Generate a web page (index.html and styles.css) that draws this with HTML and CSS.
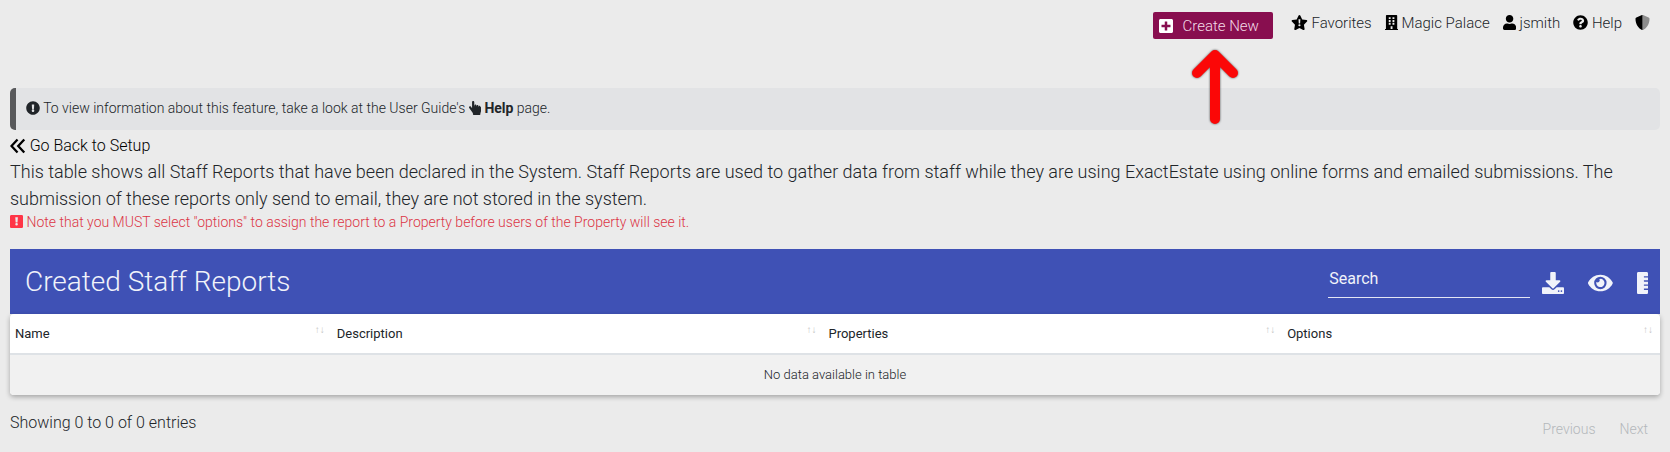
FILE: index.html
```
<!DOCTYPE html>
<html lang="en">
<head>
  <meta charset="UTF-8">
  <meta name="viewport" content="width=device-width, initial-scale=1.0">
  <title>Staff Reports</title>
  <link rel="stylesheet" href="styles.css">
</head>
<body>
  <header class="topbar">
    <div class="create">
      <button type="button" class="btn-create">
        <svg class="icon" viewBox="0 0 448 512"><path d="M400 32H48C21.5 32 0 53.5 0 80v352c0 26.5 21.5 48 48 48h352c26.5 0 48-21.5 48-48V80c0-26.5-21.5-48-48-48zm-32 252c0 6.600-5.400 12-12 12h-92v92c0 6.600-5.400 12-12 12h-56c-6.600 0-12-5.400-12-12v-92H92c-6.600 0-12-5.400-12-12v-56c0-6.600 5.400-12 12-12h92v-92c0-6.600 5.400-12 12-12h56c6.600 0 12 5.400 12 12v92h92c6.600 0 12 5.400 12 12v56z"/></svg>
        Create New
      </button>
      <svg class="arrow" viewBox="0 0 50 78"><path d="M25 70V7M7 24L25 6L43 24"/></svg>
    </div>
    <nav class="menu">
      <a href="#"><svg class="icon" viewBox="0 0 576 512"><path fill-rule="evenodd" d="M259 18L194 150L48 171c-26 4-37 36-18 55l106 103l-25 145c-4 26 23 46 47 34l130-68l130 68c24 12 51-8 47-34l-25-145l106-103c19-19 8-51-18-55l-146-21l-65-132c-12-24-46-24-58 0zM256 144h64l-9 144h-46zM288 312a38 38 0 1 1 0 76a38 38 0 1 1 0-76z"/></svg> Favorites</a>
      <a href="#"><svg class="icon" viewBox="0 0 448 512"><path fill-rule="evenodd" d="M436 480h-20V24c0-13-11-24-24-24H56C43 0 32 11 32 24v456H12c-7 0-12 5-12 12v20h448v-20c0-7-5-12-12-12zM128 76h64v64h-64zM256 76h64v64h-64zM128 172h64v64h-64zM256 172h64v64h-64zM128 268h64v64h-64zM256 268h64v64h-64zM192 384h64v96h-64z"/></svg> Magic Palace</a>
      <a href="#"><svg class="icon" viewBox="0 0 448 512"><path d="M224 256c70.700 0 128-57.300 128-128S294.700 0 224 0 96 57.300 96 128s57.300 128 128 128zm89.600 32h-16.700c-22.200 10.200-46.900 16-72.900 16s-50.600-5.800-72.900-16h-16.700C60.200 288 0 348.200 0 422.400V464c0 26.500 21.500 48 48 48h352c26.500 0 48-21.500 48-48v-41.600c0-74.200-60.200-134.400-134.400-134.400z"/></svg> jsmith</a>
      <a href="#"><svg class="icon" viewBox="0 0 512 512"><path d="M504 256c0 136.997-111.043 248-248 248S8 392.997 8 256C8 119.083 119.043 8 256 8s248 111.083 248 248zM262.655 90c-54.497 0-89.255 22.957-116.549 63.758-3.536 5.286-2.353 12.415 2.715 16.258l34.699 26.310c5.205 3.947 12.621 3.008 16.665-2.122 17.864-22.658 30.113-35.797 57.303-35.797 20.429 0 45.698 13.148 45.698 32.958 0 14.976-12.363 22.667-32.534 33.976C247.128 238.528 216 254.941 216 296v4c0 6.627 5.373 12 12 12h56c6.627 0 12-5.373 12-12v-1.333c0-28.462 83.186-29.647 83.186-106.667 0-58.002-60.165-102-116.531-102zM256 338c-25.365 0-46 20.635-46 46 0 25.364 20.635 46 46 46s46-20.636 46-46c0-25.365-20.635-46-46-46z"/></svg> Help</a>
      <a href="#" aria-label="Security"><svg class="icon" viewBox="0 0 512 512"><path d="M256 0c-6 0-12 1-18 4L46 84c-18 7-30 25-30 44c0 199 115 336 222 380c6 3 12 4 18 4z"/><path opacity=".4" d="M256 0c6 0 12 1 18 4l192 80c18 7 30 25 30 44c0 199-115 336-222 380c-6 3-12 4-18 4z"/></svg></a>
    </nav>
  </header>

  <main class="content">
    <div class="alert">
      <svg class="icon" viewBox="0 0 512 512"><path d="M504 256c0 136.997-111.043 248-248 248S8 392.997 8 256C8 119.083 119.043 8 256 8s248 111.083 248 248zm-248 50c-25.405 0-46 20.595-46 46s20.595 46 46 46 46-20.595 46-46-20.595-46-46-46zm-43.673-165.346l7.418 136c.347 6.364 5.609 11.346 11.982 11.346h48.546c6.373 0 11.635-4.982 11.982-11.346l7.418-136c.375-6.874-5.098-12.654-11.982-12.654h-63.383c-6.884 0-12.356 5.780-11.981 12.654z"/></svg>
      To view information about this feature, take a look at the User Guide's
      <a href="#"><svg class="icon" viewBox="0 0 448 512"><path d="M448 240v96c0 3-1 8-2 11l-30 109v32c0 13-11 24-24 24H168c-13 0-24-11-24-24v-32c0-15-10-27-24-45L8 259c-16-22-8-48 8-60c18-13 43-9 56 9l40 54V40c0-22 18-40 40-40s40 18 40 40v150h8v-30c0-18 14-32 32-32s36 14 36 32v30h8v-14c0-18 14-32 32-32s36 14 36 32v30h8c0-18 14-32 32-32s32 16 32 34z"/></svg> <b>Help</b></a> page.
    </div>

    <a href="#" class="back"><svg class="icon" viewBox="0 0 448 512"><path class="stroke" d="M214 72L42 256L214 440M406 72L234 256L406 440"/></svg> Go Back to Setup</a>
    <p class="lead">This table shows all Staff Reports that have been declared in the System. Staff Reports are used to gather data from staff while they are using ExactEstate using online forms and emailed submissions. The submission of these reports only send to email, they are not stored in the system.</p>
    <p class="note"><svg class="icon" viewBox="0 0 448 512"><path fill-rule="evenodd" d="M48 32h352c27 0 48 21 48 48v352c0 27-21 48-48 48H48c-27 0-48-21-48-48V80c0-27 21-48 48-48zM180 112h88l-12 176h-64zM224 308a44 44 0 1 1 0 88a44 44 0 1 1 0-88z"/></svg> Note that you MUST select "options" to assign the report to a Property before users of the Property will see it.</p>

    <section class="panel">
      <div class="panel-header">
        <h1>Created Staff Reports</h1>
        <input type="search" class="search" placeholder="Search" aria-label="Search">
        <div class="tools">
          <button type="button" aria-label="Download"><svg class="icon" viewBox="0 0 512 512"><path fill-rule="evenodd" d="M216 0h80c13 0 24 11 24 24v168h88c18 0 27 22 14 34L270 378c-8 7-20 7-28 0L90 226c-13-12-4-34 14-34h88V24c0-13 11-24 24-24zM512 376v112c0 13-11 24-24 24H24c-13 0-24-11-24-24V376c0-13 11-24 24-24h146l50 49c20 20 52 20 72 0l50-49h146c13 0 24 11 24 24zM368 444a20 20 0 1 0 40 0a20 20 0 1 0-40 0zM432 444a20 20 0 1 0 40 0a20 20 0 1 0-40 0z"/></svg></button>
          <button type="button" aria-label="Columns"><svg class="icon" viewBox="0 0 576 512"><path d="M572.520 241.400C518.290 135.590 410.930 64 288 64S57.680 135.640 3.480 241.410a32.350 32.350 0 0 0 0 29.190C57.710 376.410 165.070 448 288 448s230.320-71.640 284.520-177.410a32.350 32.350 0 0 0 0-29.190zM288 400a144 144 0 1 1 144-144 143.930 143.930 0 0 1-144 144zm0-240a95.310 95.310 0 0 0-25.310 3.790 47.850 47.850 0 0 1-66.900 66.900A95.780 95.780 0 1 0 288 160z"/></svg></button>
          <button type="button" aria-label="Row height"><svg class="icon" viewBox="0 0 256 512"><path d="M168 416c-4 0-8-4-8-8v-16c0-4 4-8 8-8h88v-64h-88c-4 0-8-4-8-8v-16c0-4 4-8 8-8h88v-64h-88c-4 0-8-4-8-8v-16c0-4 4-8 8-8h88v-64h-88c-4 0-8-4-8-8v-16c0-4 4-8 8-8h88V32c0-18-14-32-32-32H32C14 0 0 14 0 32v448c0 18 14 32 32 32h192c18 0 32-14 32-32v-64z"/></svg></button>
        </div>
      </div>
      <table class="reports">
        <thead>
          <tr>
            <th class="col-name"><span>Name <i class="sort">↑↓</i></span></th>
            <th class="col-description"><span>Description <i class="sort">↑↓</i></span></th>
            <th class="col-properties"><span>Properties <i class="sort">↑↓</i></span></th>
            <th class="col-options"><span>Options <i class="sort">↑↓</i></span></th>
          </tr>
        </thead>
        <tbody>
          <tr><td colspan="4">No data available in table</td></tr>
        </tbody>
      </table>
    </section>

    <footer class="table-footer">
      <div>Showing 0 to 0 of 0 entries</div>
      <div class="pager">
        <button type="button" disabled>Previous</button>
        <button type="button" disabled>Next</button>
      </div>
    </footer>
  </main>
</body>
</html>
```
FILE: styles.css
```
* {
  box-sizing: border-box;
}

body {
  margin: 0;
  padding: 12px 10px 0;
  background-color: #ebebeb;
  color: #212529;
  font-family: Roboto, sans-serif;
  font-size: 16px;
  font-weight: 300;
  line-height: 24px;
}

a {
  color: inherit;
  text-decoration: none;
}

button {
  border: 0;
  background: none;
  color: inherit;
  font: inherit;
}

.icon {
  height: 1em;
  fill: currentColor;
  vertical-align: -2px;
}

.topbar {
  display: flex;
  justify-content: flex-end;
  gap: 18px;
  height: 76px;
  padding-right: 10px;
}

.create {
  position: relative;
}

.btn-create {
  display: flex;
  align-items: center;
  gap: 10px;
  height: 27px;
  padding: 0 14px 0 6px;
  border-radius: 2px;
  background-color: #880e4f;
  color: #f3dce8;
  font-size: 15px;
}

.btn-create .icon {
  height: 16px;
  fill: #fff;
}

.arrow {
  position: absolute;
  top: 37px;
  left: 37px;
  width: 50px;
  height: 78px;
  fill: none;
  stroke: #fb0707;
  stroke-width: 10;
  stroke-linecap: round;
  stroke-linejoin: round;
  filter: drop-shadow(0 0 1px #555);
}

.menu {
  display: flex;
  gap: 13px;
  font-size: 15px;
  line-height: 22px;
}

.menu .icon {
  fill: #000;
}

.alert {
  padding: 9px 10px 11px;
  border-left: 6px solid #58595b;
  border-radius: 5px;
  background-color: #e2e3e5;
  font-size: 14px;
  line-height: 22px;
}

.alert b {
  font-weight: 700;
}

.back {
  display: block;
  margin-top: 4px;
  color: #000;
}

.back .icon {
  height: 18px;
  margin-bottom: -2px;
}

.stroke {
  fill: none;
  stroke: currentColor;
  stroke-width: 66;
}

.lead {
  margin: 0;
  font-size: 18px;
  line-height: 27px;
}

.note {
  margin: 0;
  color: #dc3545;
  font-size: 14px;
  line-height: 21px;
}

.note .icon {
  height: 15px;
  fill: #ff3547;
}

.panel {
  margin-top: 16px;
}

.panel-header {
  display: flex;
  align-items: center;
  height: 65px;
  padding: 0 12px 0 15px;
  background-color: #3f51b5;
  color: #f1f3fa;
}

.panel-header h1 {
  flex: 1;
  margin: 0;
  font-size: 28px;
  font-weight: 300;
  line-height: 34px;
}

.search {
  width: 202px;
  height: 34px;
  margin-bottom: 2px;
  padding: 0 1px 4px;
  border: 0;
  border-bottom: 1px solid #e3e6f4;
  border-radius: 0;
  outline: 0;
  background: none;
  color: #fff;
  font: 400 16px Roboto, sans-serif;
}

.search::placeholder {
  color: #f1f3fa;
  opacity: 1;
}

.tools {
  display: flex;
  gap: 24px;
  margin: 2px 0 0 12px;
}

.tools button {
  padding: 0;
}

.tools .icon {
  display: block;
  height: 22px;
}

.reports {
  width: 100%;
  border-collapse: separate;
  border-spacing: 0;
  table-layout: fixed;
  border-radius: 4px;
  background-color: #fff;
  box-shadow: 0 2px 5px rgba(0, 0, 0, 0.3);
  font-size: 13px;
  line-height: 20px;
}

.reports th {
  height: 41px;
  padding: 0 5px;
  border-bottom: 2px solid #dee2e6;
  font-weight: 400;
  text-align: left;
}

.reports th span {
  display: flex;
  justify-content: space-between;
}

.sort {
  padding-right: 2px;
  color: #c4c4c4;
  font: 10px/12px "Liberation Sans", sans-serif;
}

.col-name {
  width: 19.5%;
}

.col-description {
  width: 29.8%;
}

.col-properties {
  width: 27.8%;
}

.reports td {
  height: 40px;
  padding: 0;
  border-radius: 0 0 4px 4px;
  background-color: #f1f1f1;
  text-align: center;
}

.table-footer {
  display: flex;
  justify-content: space-between;
  padding-top: 16px;
}

.pager {
  display: flex;
  gap: 24px;
  padding: 6px 12px 0 0;
  color: #b4b8bb;
  font-size: 14px;
}

.pager button {
  padding: 0;
}
```
